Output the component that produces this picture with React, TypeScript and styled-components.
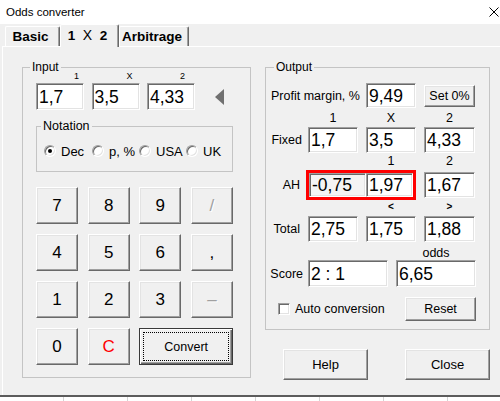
import React from "react";
import styled, { createGlobalStyle } from "styled-components";

const GlobalStyle = createGlobalStyle`
  html, body { margin: 0; padding: 0; background: #ffffff; }
  body { font-family: "Liberation Sans", Arial, sans-serif; color: #000; }
  * { box-sizing: border-box; }
`;

const Window = styled.div`
  width: 500px;
  height: 397px;
  background: #f0f0f0;
  border-bottom: 2px solid #5c5c5c;
  display: flex;
  flex-direction: column;
  overflow: hidden;
`;

const SheetStrip = styled.div`
  height: 4px;
  background: repeating-linear-gradient(90deg, #ffffff 0 63px, #d4d4d4 63px 64px);
`;

const TitleBar = styled.div`
  height: 24px;
  background: #ffffff;
  display: flex;
  align-items: center;
  justify-content: space-between;
  padding-left: 6px;
  font-size: 11.5px;
`;

const CloseGlyph = styled.svg`
  margin-right: 1px;
`;

const TabStrip = styled.div`
  height: 22px;
  display: flex;
  align-items: flex-end;
  padding-left: 5px;
`;

const Tab = styled.div<{ $w: number; $active?: boolean }>`
  width: ${(p) => p.$w}px;
  height: ${(p) => (p.$active ? 23 : 20)}px;
  margin-bottom: ${(p) => (p.$active ? -1 : 0)}px;
  position: relative;
  z-index: ${(p) => (p.$active ? 1 : 0)};
  background: #f0f0f0;
  border-top: 1px solid #ffffff;
  border-left: 1px solid #ffffff;
  border-right: 1px solid #696969;
  box-shadow: inset -1px 0 0 #a0a0a0;
  border-radius: 2px 2px 0 0;
  display: flex;
  align-items: center;
  justify-content: center;
  padding: ${(p) => (p.$active ? "0 4px 3px 0" : "0 4px 0 0")};
  font-weight: bold;
  font-size: 13.5px;
`;

const TabText = styled.span`
  white-space: pre;
`;

const ThinX = styled.span`
  font-weight: normal;
  font-size: 14px;
`;

const Panel = styled.div`
  flex: 1;
  margin-left: 2px;
  border-top: 1px solid #ffffff;
  border-left: 1px solid #ffffff;
  display: flex;
  align-items: flex-start;
  gap: 14px;
  padding: 15px 0 0 19px;
`;

const GroupBox = styled.fieldset<{ $w: number; $pad: string }>`
  margin: 0;
  min-width: 0;
  width: ${(p) => p.$w}px;
  border: 1px solid #c4c4c4;
  padding: ${(p) => p.$pad};
`;

const Legend = styled.legend<{ $ml: number; $fs?: number }>`
  margin-left: ${(p) => p.$ml}px;
  padding: 0 2px;
  font-size: ${(p) => p.$fs ?? 12}px;
  line-height: 10px;
`;

const TinyLabels = styled.div`
  display: flex;
  gap: 7.5px;
  height: 8px;
  font-size: 9px;
  line-height: 8px;
`;

const TinyLabel = styled.span<{ $pr: number }>`
  width: 48px;
  text-align: right;
  padding-right: ${(p) => p.$pr}px;
`;

const InputRow = styled.div`
  margin-top: 3px;
  display: flex;
  align-items: center;
  gap: 7.5px;
`;

const Field = styled.div<{ $w?: number; $h: number; $bg?: string }>`
  width: ${(p) => (p.$w ? `${p.$w}px` : "auto")};
  flex: ${(p) => (p.$w ? "none" : "1")};
  height: ${(p) => p.$h}px;
  background: ${(p) => p.$bg ?? "#ffffff"};
  border: 1px solid;
  border-color: #a0a0a0 #ffffff #ffffff #a0a0a0;
  box-shadow: inset 1px 1px 0 #696969, inset -1px -1px 0 #e3e3e3;
  display: flex;
  align-items: center;
  padding: 1px 0 0 2px;
  font-size: 17.5px;
  white-space: nowrap;
  overflow: hidden;
`;

const ArrowMark = styled.svg`
  margin-left: 12.5px;
`;

const NotationBox = styled(GroupBox)`
  margin-top: 11px;
`;

const RadioRow = styled.div`
  display: flex;
  align-items: center;
  height: 14px;
  font-size: 13px;
`;

const RadioItem = styled.span<{ $w: number }>`
  width: ${(p) => p.$w}px;
  display: flex;
  align-items: center;
  gap: 5px;
`;

const RadioCircle = styled.span`
  width: 12px;
  height: 12px;
  border-radius: 50%;
  background: #ffffff;
  border: 1px solid;
  border-color: #a0a0a0 #ffffff #ffffff #a0a0a0;
  box-shadow: inset 1px 1px 0 #696969, inset -1px -1px 0 #e3e3e3;
  display: flex;
  align-items: center;
  justify-content: center;
`;

const RadioDot = styled.span`
  width: 4px;
  height: 4px;
  border-radius: 50%;
  background: #000;
`;

const Keypad = styled.div`
  margin-top: 15px;
  width: 197px;
  display: grid;
  grid-template-columns: repeat(4, 42px);
  justify-content: space-between;
  grid-auto-rows: 37px;
  row-gap: 10px;
`;

const Key = styled.button<{ $tone?: "normal" | "disabled" | "red" }>`
  font-family: inherit;
  font-size: 17px;
  padding: 0;
  background: #f0f0f0;
  color: ${(p) => (p.$tone === "red" ? "#ff0000" : p.$tone === "disabled" ? "#a0a0a0" : "#000")};
  text-shadow: ${(p) => (p.$tone === "disabled" ? "1px 1px 0 #ffffff" : "none")};
  border: 1px solid;
  border-color: #ffffff #696969 #696969 #ffffff;
  box-shadow: inset -1px -1px 0 #a0a0a0, inset 1px 1px 0 #e3e3e3;
`;

const DefaultKey = styled.button`
  grid-column: span 2;
  font-family: inherit;
  font-size: 12.5px;
  background: #f0f0f0;
  color: #000;
  border: 1px solid #3a3a3a;
  box-shadow: inset 1px 1px 0 #ffffff, inset -1px -1px 0 #696969, inset -2px -2px 0 #a0a0a0;
  padding: 3px;
  display: flex;
`;

const FocusRect = styled.span`
  flex: 1;
  border: 1px dotted #000;
  display: flex;
  align-items: center;
  justify-content: center;
`;

const RightColumn = styled.div`
  width: 225px;
  display: flex;
  flex-direction: column;
`;

const OutRow = styled.div<{ $mt: number; $h: number }>`
  margin-top: ${(p) => p.$mt}px;
  height: ${(p) => p.$h}px;
  display: grid;
  grid-template-columns: 29px 50px 50px 51px;
  grid-template-rows: ${(p) => p.$h}px;
  column-gap: 8px;
  align-items: center;
  font-size: 12.5px;
`;

const RowLabel = styled.span<{ $mr?: number }>`
  justify-self: end;
  margin-right: ${(p) => p.$mr ?? 0}px;
  white-space: nowrap;
`;

const WideLabel = styled.span`
  grid-column: 1 / 3;
  white-space: nowrap;
`;

const ColLabel = styled.span<{ $col: number }>`
  grid-column: ${(p) => p.$col};
  text-align: center;
`;

const Chevron = styled(ColLabel)`
  font-weight: bold;
  font-size: 10px;
  line-height: 14px;
`;

const Highlight = styled.div`
  grid-column: 2 / 4;
  align-self: stretch;
  margin: -2px 0 -2px -2px;
  border: 3px solid #ff0000;
  display: flex;
`;

const ScoreFields = styled.div`
  grid-column: 2 / 5;
  display: flex;
  gap: 8px;
`;

const OddsLabel = styled.span`
  grid-column: 2 / 5;
  justify-self: end;
  width: 80px;
  margin-right: -1px;
  text-align: center;
`;

const Btn = styled.button<{ $w: number; $h: number; $col?: number }>`
  width: ${(p) => p.$w}px;
  height: ${(p) => p.$h}px;
  grid-column: ${(p) => p.$col ?? "auto"};
  font-family: inherit;
  font-size: ${(p) => (p.$h > 28 ? 13 : 12.5)}px;
  padding: 0;
  background: #f0f0f0;
  color: #000;
  border: 1px solid;
  border-color: #ffffff #696969 #696969 #ffffff;
  box-shadow: inset -1px -1px 0 #a0a0a0, inset 1px 1px 0 #e3e3e3;
`;

const AutoRow = styled.div`
  margin-top: 10px;
  display: flex;
  align-items: center;
  padding-left: 7px;
  font-size: 12.5px;
`;

const CheckBox = styled.span`
  width: 12px;
  height: 12px;
  background: #ffffff;
  border: 1px solid;
  border-color: #a0a0a0 #ffffff #ffffff #a0a0a0;
  box-shadow: inset 1px 1px 0 #696969, inset -1px -1px 0 #e3e3e3;
  margin-right: 5px;
`;

const Spacer = styled.span`
  flex: 1;
`;

const FooterRow = styled.div`
  margin-top: 19px;
  display: flex;
  justify-content: space-between;
  padding-left: 18px;
`;

const keys: { label: string; tone?: "normal" | "disabled" | "red" }[] = [
  { label: "7" }, { label: "8" }, { label: "9" }, { label: "/", tone: "disabled" },
  { label: "4" }, { label: "5" }, { label: "6" }, { label: "," },
  { label: "1" }, { label: "2" }, { label: "3" }, { label: "–", tone: "disabled" },
  { label: "0" }, { label: "C", tone: "red" },
];

export default function App() {
  return (
    <>
      <GlobalStyle />
      <Window>
        <TitleBar>
          <span>Odds converter</span>
          <CloseGlyph width="10" height="10" viewBox="0 0 10 10">
            <path d="M0.5 0.5 L9.5 9.5 M9.5 0.5 L0.5 9.5" stroke="#000" strokeWidth="1" fill="none" />
          </CloseGlyph>
        </TitleBar>
        <TabStrip>
          <Tab $w={55}><TabText>Basic</TabText></Tab>
          <Tab $w={59} $active>
            <TabText>{"1  "}<ThinX>X</ThinX>{"  2"}</TabText>
          </Tab>
          <Tab $w={70}><TabText>Arbitrage</TabText></Tab>
        </TabStrip>
        <Panel>
          <GroupBox $w={229} $pad="0 17px 12px 13px">
            <Legend $ml={-6}>Input</Legend>
            <TinyLabels>
              <TinyLabel $pr={5}>1</TinyLabel>
              <TinyLabel $pr={7}>X</TinyLabel>
              <TinyLabel $pr={10}>2</TinyLabel>
            </TinyLabels>
            <InputRow>
              <Field $w={48} $h={27}>1,7</Field>
              <Field $w={48} $h={27}>3,5</Field>
              <Field $w={48} $h={27}>4,33</Field>
              <ArrowMark width="9" height="16" viewBox="0 0 9 16">
                <polygon points="9,0 9,16 0,8" fill="#707070" />
              </ArrowMark>
            </InputRow>
            <NotationBox $w={197} $pad="13px 0 13px 7px">
              <Legend $ml={-3} $fs={12.5}>Notation</Legend>
              <RadioRow>
                <RadioItem $w={48}>
                  <RadioCircle><RadioDot /></RadioCircle>Dec
                </RadioItem>
                <RadioItem $w={47}>
                  <RadioCircle />p, %
                </RadioItem>
                <RadioItem $w={47}>
                  <RadioCircle />USA
                </RadioItem>
                <RadioItem $w={40}>
                  <RadioCircle />UK
                </RadioItem>
              </RadioRow>
            </NotationBox>
            <Keypad>
              {keys.map((k, i) => (
                <Key key={i} $tone={k.tone}>{k.label}</Key>
              ))}
              <DefaultKey>
                <FocusRect>Convert</FocusRect>
              </DefaultKey>
            </Keypad>
          </GroupBox>

          <RightColumn>
            <GroupBox $w={225} $pad="0 13px 8px 5px">
              <Legend $ml={3}>Output</Legend>
              <OutRow $mt={11} $h={25}>
                <WideLabel>Profit margin, %</WideLabel>
                <Field $w={50} $h={25}>9,49</Field>
                <Btn $w={51} $h={22}>Set 0%</Btn>
              </OutRow>
              <OutRow $mt={3} $h={14}>
                <ColLabel $col={2}>1</ColLabel>
                <ColLabel $col={3}>X</ColLabel>
                <ColLabel $col={4}>2</ColLabel>
              </OutRow>
              <OutRow $mt={2} $h={26}>
                <RowLabel $mr={-2}>Fixed</RowLabel>
                <Field $h={26}>1,7</Field>
                <Field $h={26}>3,5</Field>
                <Field $h={26}>4,33</Field>
              </OutRow>
              <OutRow $mt={1} $h={14}>
                <ColLabel $col={3}>1</ColLabel>
                <ColLabel $col={4}>2</ColLabel>
              </OutRow>
              <OutRow $mt={4} $h={26}>
                <RowLabel>AH</RowLabel>
                <Highlight>
                  <Field $w={57} $h={24} $bg="#f4f4f4">-0,75</Field>
                  <Field $h={24}>1,97</Field>
                </Highlight>
                <Field $h={26}>1,67</Field>
              </OutRow>
              <OutRow $mt={2} $h={14}>
                <Chevron $col={3}>&lt;</Chevron>
                <Chevron $col={4}>&gt;</Chevron>
              </OutRow>
              <OutRow $mt={2} $h={26}>
                <RowLabel>Total</RowLabel>
                <Field $h={26}>2,75</Field>
                <Field $h={26}>1,75</Field>
                <Field $h={26}>1,88</Field>
              </OutRow>
              <OutRow $mt={4} $h={14}>
                <OddsLabel>odds</OddsLabel>
              </OutRow>
              <OutRow $mt={0} $h={27}>
                <RowLabel $mr={-3}>Score</RowLabel>
                <ScoreFields>
                  <Field $w={80} $h={27}>2 : 1</Field>
                  <Field $w={80} $h={27}>6,65</Field>
                </ScoreFields>
              </OutRow>
              <AutoRow>
                <CheckBox />
                <span>Auto conversion</span>
                <Spacer />
                <Btn $w={71} $h={24}>Reset</Btn>
              </AutoRow>
            </GroupBox>
            <FooterRow>
              <Btn $w={85} $h={31}>Help</Btn>
              <Btn $w={85} $h={31}>Close</Btn>
            </FooterRow>
          </RightColumn>
        </Panel>
      </Window>
      <SheetStrip />
    </>
  );
}
